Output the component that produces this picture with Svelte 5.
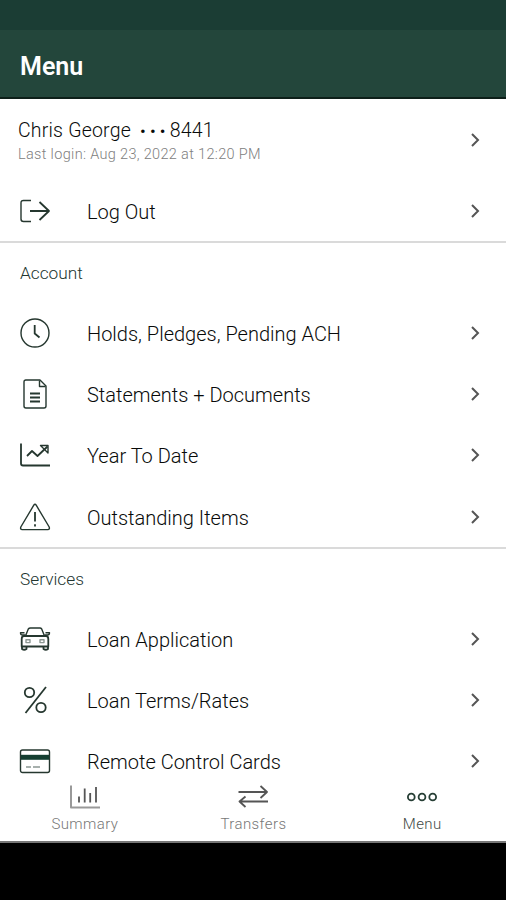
<script lang="ts">
	type Item = { icon: string; label: string };

	const sections: { title: string; items: Item[] }[] = [
		{
			title: 'Account',
			items: [
				{ icon: 'clock', label: 'Holds, Pledges, Pending ACH' },
				{ icon: 'document', label: 'Statements + Documents' },
				{ icon: 'trend', label: 'Year To Date' },
				{ icon: 'warning', label: 'Outstanding Items' }
			]
		},
		{
			title: 'Services',
			items: [
				{ icon: 'car', label: 'Loan Application' },
				{ icon: 'percent', label: 'Loan Terms/Rates' },
				{ icon: 'card', label: 'Remote Control Cards' }
			]
		}
	];

	const tabs: Item[] = [
		{ icon: 'bars', label: 'Summary' },
		{ icon: 'transfer', label: 'Transfers' },
		{ icon: 'dots', label: 'Menu' }
	];

	let activeTab = $state('Menu');
</script>

{#snippet icon(name: string)}
	<svg class="icon" viewBox="0 0 32 32">
		{#if name === 'logout'}
			<path d="M12 5.5H4.5Q2 5.5 2 8V24Q2 26.5 4.5 26.5H12" />
			<path class="thick" d="M11 16H30M20.5 7L30 16L20.5 25" />
		{:else if name === 'clock'}
			<circle cx="16" cy="16" r="14" />
			<path class="thick" d="M15.7 8V16.5L20.5 20.5" />
		{:else if name === 'document'}
			<path d="M6.5 2H21L27 8V28Q27 30 25 30H7Q5 30 5 28V4Q5 2 7 2Z" />
			<path d="M20.5 2.5V8.5H26.5" />
			<path class="thick" d="M11 15.5H21M11 19.5H21M11 23.5H21" />
		{:else if name === 'trend'}
			<path class="thick" d="M2 4.5V24.5Q2 26.5 4 26.5H31" />
			<path class="thick" d="M8 17L13 12L18.5 17L28.5 7.5" />
			<path d="M21.5 6.5H29V14Z" />
		{:else if name === 'warning'}
			<path d="M14.8 4.2Q16 2.2 17.2 4.2L30.2 26Q31 28.6 28.8 28.6H3.2Q1 28.6 1.8 26Z" />
			<path class="thick" d="M16 11V20.5M16 23.2V25.5" />
		{:else if name === 'car'}
			<path d="M6.5 13L9.3 6Q10 5 11.5 5H21Q22 5 22.7 6L25.5 13" />
			<path class="thick" d="M5 13H27Q29.3 13 29.3 16V23.5H2.7V16Q2.7 13 5 13Z" />
			<path d="M6.5 12H3.5Q1.5 12 1.5 9.8H5.5M25.5 12H28.5Q30.5 12 30.5 9.8H26.5" />
			<path class="thick" d="M3 23.5V26Q5.2 27.5 7.5 26V23.5M24.5 23.5V26Q26.8 27.5 29 26V23.5" />
			<path class="soft" d="M7 16.8H11V19.6H7ZM21 16.8H25V19.6H21Z" />
		{:else if name === 'percent'}
			<path class="thick" d="M27 3L6.5 29" />
			<circle class="thick" cx="10.5" cy="8.5" r="4.7" />
			<circle class="thick" cx="22" cy="23.5" r="4.7" />
		{:else if name === 'card'}
			<rect x="1.5" y="5" width="29" height="22.5" rx="2" />
			<path class="fill" d="M2 9.8H30V14.8H2Z" />
			<path class="soft" d="M7 22H12M14 22H21" />
		{:else if name === 'bars'}
			<path d="M2 4.5V26.5H31" class="axis" />
			<path class="thick" d="M10 15.5V21.5M15.7 7.5V21.5M21.2 12V21.5M27 6V21.5" />
		{:else if name === 'transfer'}
			<path class="thick" d="M1.5 11H30M23.5 5L30 11L23.5 17M31 20.5H2.5M8.5 15.5L2.5 20.5L8.5 26" />
		{:else if name === 'dots'}
			<g class="thick">
				<circle cx="5.3" cy="16" r="3.4" />
				<circle cx="16" cy="16" r="3.4" />
				<circle cx="26.7" cy="16" r="3.4" />
			</g>
		{/if}
	</svg>
{/snippet}

{#snippet chevron()}
	<svg class="chevron" viewBox="0 0 10 16"><path d="M2 2L8 8L2 14" /></svg>
{/snippet}

{#snippet row(item: Item)}
	<button class="row">
		{@render icon(item.icon)}
		<span class="label">{item.label}</span>
		{@render chevron()}
	</button>
{/snippet}

<div class="screen">
	<div class="status-bar"></div>
	<header><h1>Menu</h1></header>

	<main>
		<button class="profile">
			<span class="who">
				<span class="name">Chris George <span class="mask">•••</span>8441</span>
				<span class="login">Last login: Aug 23, 2022 at 12:20 PM</span>
			</span>
			{@render chevron()}
		</button>
		{@render row({ icon: 'logout', label: 'Log Out' })}

		{#each sections as section}
			<section>
				<h2>{section.title}</h2>
				{#each section.items as item}
					{@render row(item)}
				{/each}
			</section>
		{/each}
	</main>

	<nav>
		{#each tabs as tab}
			<button class="tab" class:active={activeTab === tab.label} onclick={() => (activeTab = tab.label)}>
				{@render icon(tab.icon)}
				<span>{tab.label}</span>
			</button>
		{/each}
	</nav>
	<div class="system-bar"></div>
</div>

<style>
	:global(body) {
		margin: 0;
		background: #000;
	}

	.screen {
		display: flex;
		flex-direction: column;
		height: 900px;
		overflow: hidden;
		background: #fff;
		color: #080a09;
		font-family: Roboto, sans-serif;
	}

	button {
		box-sizing: border-box;
		margin: 0;
		border: 0;
		background: none;
		color: inherit;
		font: inherit;
		text-align: left;
	}

	.status-bar {
		flex: none;
		height: 30px;
		background: #1b3d34;
	}

	header {
		flex: none;
		box-sizing: border-box;
		display: flex;
		align-items: center;
		height: 69px;
		padding: 5px 20px 0;
		border-bottom: 2px solid #0d1f19;
		background: #23463b;
	}

	h1 {
		margin: 0;
		color: #fff;
		font-size: 25px;
		font-weight: 600;
	}

	main {
		flex: 1;
		min-height: 0;
		overflow: hidden;
	}

	.profile {
		display: flex;
		align-items: center;
		justify-content: space-between;
		width: 100%;
		height: 81px;
		padding: 0 26px 0 18px;
	}

	.who {
		display: flex;
		flex-direction: column;
		padding-top: 4px;
	}

	.name {
		font-size: 19.5px;
		font-weight: 350;
		line-height: 25px;
		letter-spacing: 0.2px;
	}

	.mask {
		margin-left: 4px;
		font-size: 17px;
		font-weight: 400;
		letter-spacing: 4.2px;
	}

	.login {
		color: #808080;
		font-size: 14.5px;
		font-weight: 350;
		line-height: 21px;
		letter-spacing: 0.33px;
	}

	.row {
		display: flex;
		align-items: center;
		width: 100%;
		height: 61.4px;
		padding: 0 26px 0 19px;
	}

	.label {
		flex: 1;
		margin-left: 36px;
		padding-top: 2px;
		font-size: 20px;
		font-weight: 350;
		line-height: 22px;
	}

	section {
		border-top: 2px solid #dadada;
	}

	h2 {
		height: 58.5px;
		margin: 0;
		padding-left: 20px;
		color: #22352f;
		font-size: 17.3px;
		font-weight: 350;
		line-height: 60.5px;
	}

	.icon {
		flex: none;
		width: 32px;
		height: 32px;
		fill: none;
		stroke: #25372f;
		stroke-width: 1.4;
		stroke-linejoin: round;
	}

	.icon .thick {
		stroke-width: 1.8;
	}

	.icon .soft {
		stroke: #8b9792;
	}

	.icon .fill {
		fill: #153f31;
		stroke: none;
	}

	.icon .axis {
		stroke: #999;
		stroke-width: 2;
	}

	.chevron {
		flex: none;
		width: 10px;
		height: 16px;
		fill: none;
		stroke: #555;
		stroke-width: 2;
	}

	nav {
		flex: none;
		box-sizing: border-box;
		display: grid;
		grid-template-columns: repeat(3, 1fr);
		height: 67px;
		border-bottom: 2px solid #777;
		background: #fff;
	}

	.tab {
		display: flex;
		flex-direction: column;
		align-items: center;
		padding: 5px 0 0 1px;
		color: #777;
		font-size: 15px;
		font-weight: 350;
		line-height: 22px;
		letter-spacing: 0.4px;
	}

	.tab .icon {
		stroke: #555;
	}

	.tab.active {
		color: #3f4a46;
	}

	.tab.active .icon {
		stroke: #263e35;
	}

	.system-bar {
		flex: none;
		height: 57px;
		background: #000;
	}
</style>
